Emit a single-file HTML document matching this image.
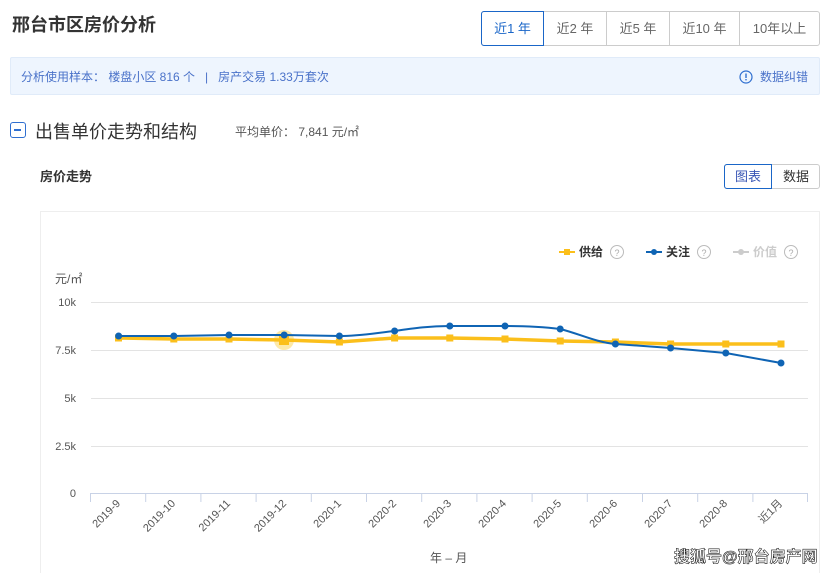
<!DOCTYPE html>
<html><head><meta charset="utf-8"><style>
*{margin:0;padding:0;box-sizing:border-box}
html,body{width:838px;height:573px;overflow:hidden}
body{background:#fff;font-family:"Liberation Sans","Noto Sans CJK SC",sans-serif;position:relative}
.a{position:absolute;white-space:nowrap}
</style></head><body>
<div class="a" style="left:12px;top:11px;font-size:18px;font-weight:bold;color:#333">邢台市区房价分析</div>
<div class="a" style="left:481px;top:11px;height:35px;width:339px;border:1px solid #ccc;border-radius:3px;display:flex;font-size:13px;color:#666">
<div style="width:63px;border:1px solid #1a66c8;margin:-1px 0 -1px -1px;border-radius:3px 0 0 3px;color:#1a66c8;text-align:center;line-height:33px">近1 年</div>
<div style="width:63px;border-right:1px solid #ccc;text-align:center;line-height:33px">近2 年</div>
<div style="width:63px;border-right:1px solid #ccc;text-align:center;line-height:33px">近5 年</div>
<div style="width:70px;border-right:1px solid #ccc;text-align:center;line-height:33px">近10 年</div>
<div style="flex:1;text-align:center;line-height:33px">10年以上</div>
</div>
<div class="a" style="left:10px;top:57px;width:810px;height:38px;background:#eef5fe;border:1px solid #e0ebf9;border-radius:2px"></div>
<div class="a" style="left:21px;top:68px;font-size:12px;color:#4a72c9">分析使用样本： 楼盘小区 816 个 &nbsp;&nbsp;|&nbsp;&nbsp; 房产交易 1.33万套次</div>
<svg class="a" style="left:739px;top:70px" width="14" height="14"><circle cx="7" cy="7" r="6" fill="none" stroke="#2f6fd0" stroke-width="1.2"/><rect x="6.3" y="3.5" width="1.4" height="4.5" fill="#2f6fd0"/><rect x="6.3" y="9" width="1.4" height="1.4" fill="#2f6fd0"/></svg>
<div class="a" style="left:760px;top:68px;font-size:12px;color:#4a72c9">数据纠错</div>
<div class="a" style="left:10px;top:122px;width:16px;height:16px;border:1.5px solid #2f6fd0;border-radius:3px"><div style="position:absolute;left:3px;top:6px;width:7px;height:1.5px;background:#2f6fd0"></div></div>
<div class="a" style="left:35px;top:118px;font-size:18px;color:#333">出售单价走势和结构</div>
<div class="a" style="left:235px;top:123px;font-size:12px;color:#555">平均单价： 7,841 元/㎡</div>
<div class="a" style="left:40px;top:166px;font-size:13px;font-weight:bold;color:#333">房价走势</div>
<div class="a" style="left:724px;top:164px;width:96px;height:25px;border:1px solid #ccc;border-radius:3px;font-size:13px;color:#333">
<div style="position:absolute;left:-1px;top:-1px;width:48px;height:25px;border:1px solid #1a66c8;border-radius:3px 0 0 3px;text-align:center;line-height:23px;color:#3a57b5">图表</div>
<div style="position:absolute;left:47px;top:0;width:48px;text-align:center;line-height:23px">数据</div>
</div>
<div class="a" style="left:40px;top:211px;width:780px;height:370px;border:1px solid #eee"></div>
<svg class="a" style="left:0;top:0" width="838" height="573" font-family="Liberation Sans,Noto Sans CJK SC,sans-serif">
<g stroke="#e3e3e3" stroke-width="1">
<line x1="91" y1="302.5" x2="808" y2="302.5"/><line x1="91" y1="350.5" x2="808" y2="350.5"/><line x1="91" y1="398.5" x2="808" y2="398.5"/><line x1="91" y1="446.5" x2="808" y2="446.5"/>
</g>
<line x1="91" y1="493.5" x2="808" y2="493.5" stroke="#c8d2e6"/>
<g stroke="#c8d2e6">
<line x1="90.5" y1="493" x2="90.5" y2="502"/><line x1="145.7" y1="493" x2="145.7" y2="502"/><line x1="200.9" y1="493" x2="200.9" y2="502"/><line x1="256.1" y1="493" x2="256.1" y2="502"/><line x1="311.3" y1="493" x2="311.3" y2="502"/><line x1="366.5" y1="493" x2="366.5" y2="502"/><line x1="421.7" y1="493" x2="421.7" y2="502"/><line x1="476.9" y1="493" x2="476.9" y2="502"/><line x1="532.1" y1="493" x2="532.1" y2="502"/><line x1="587.3" y1="493" x2="587.3" y2="502"/><line x1="642.5" y1="493" x2="642.5" y2="502"/><line x1="697.7" y1="493" x2="697.7" y2="502"/><line x1="752.9" y1="493" x2="752.9" y2="502"/><line x1="807.5" y1="493" x2="807.5" y2="502"/>
</g>
<g font-size="11" fill="#555" text-anchor="end">
<text x="76" y="306">10k</text><text x="76" y="354">7.5k</text><text x="76" y="402">5k</text><text x="76" y="450">2.5k</text><text x="76" y="497">0</text>
</g>
<text x="55" y="283" font-size="12" fill="#555">元/㎡</text>
<g font-size="11" fill="#555" text-anchor="end">
<text transform="translate(121,504) rotate(-45)">2019-9</text>
<text transform="translate(176,504) rotate(-45)">2019-10</text>
<text transform="translate(231,504) rotate(-45)">2019-11</text>
<text transform="translate(287,504) rotate(-45)">2019-12</text>
<text transform="translate(342,504) rotate(-45)">2020-1</text>
<text transform="translate(397,504) rotate(-45)">2020-2</text>
<text transform="translate(452,504) rotate(-45)">2020-3</text>
<text transform="translate(507,504) rotate(-45)">2020-4</text>
<text transform="translate(562,504) rotate(-45)">2020-5</text>
<text transform="translate(618,504) rotate(-45)">2020-6</text>
<text transform="translate(673,504) rotate(-45)">2020-7</text>
<text transform="translate(728,504) rotate(-45)">2020-8</text>
<text transform="translate(783,504) rotate(-45)">近1月</text>
</g>
<text x="430" y="562" font-size="12" fill="#555">年 – 月</text>
<circle cx="284" cy="340" r="10" fill="#fde9a8"/>
<polyline fill="none" stroke="#fbbf1b" stroke-width="3.5" points="118.6,338 173.8,339 229,339 284.2,340 339.4,342 394.6,338 449.8,338 505,339 560.2,341 615.4,342 670.6,344 725.8,344 781,344"/>
<g fill="#fbbf1b">
<rect x="115" y="334.5" width="7" height="7"/><rect x="170.3" y="335.5" width="7" height="7"/><rect x="225.5" y="335.5" width="7" height="7"/><rect x="279" y="335" width="10" height="10"/><rect x="335.9" y="338.5" width="7" height="7"/><rect x="391.1" y="334.5" width="7" height="7"/><rect x="446.3" y="334.5" width="7" height="7"/><rect x="501.5" y="335.5" width="7" height="7"/><rect x="556.7" y="337.5" width="7" height="7"/><rect x="611.9" y="338.5" width="7" height="7"/><rect x="667.1" y="340.5" width="7" height="7"/><rect x="722.3" y="340.5" width="7" height="7"/><rect x="777.5" y="340.5" width="7" height="7"/>
</g>
<path fill="none" stroke="#0f64b4" stroke-width="2" d="M118.6,336 L173.8,336 L229,335 L284.2,335 L339.4,336 C360,336 375,333 394.6,331 C415,328 430,326 449.8,326 L505,326 C530,326 545,327 560.2,329 C580,334 595,342 615.4,344 L670.6,348 L725.8,353 L781,363"/>
<g fill="#0f64b4">
<circle cx="118.6" cy="336" r="3.5"/><circle cx="173.8" cy="336" r="3.5"/><circle cx="229" cy="335" r="3.5"/><circle cx="284.2" cy="335" r="3.5"/><circle cx="339.4" cy="336" r="3.5"/><circle cx="394.6" cy="331" r="3.5"/><circle cx="449.8" cy="326" r="3.5"/><circle cx="505" cy="326" r="3.5"/><circle cx="560.2" cy="329" r="3.5"/><circle cx="615.4" cy="344" r="3.5"/><circle cx="670.6" cy="348" r="3.5"/><circle cx="725.8" cy="353" r="3.5"/><circle cx="781" cy="363" r="3.5"/>
</g>
<g font-size="12" font-weight="bold">
<line x1="559" y1="252" x2="575" y2="252" stroke="#fbbf1b" stroke-width="2"/><rect x="564" y="249" width="6" height="6" fill="#fbbf1b"/>
<text x="579" y="256" fill="#333">供给</text>
<circle cx="617" cy="252" r="6.5" fill="none" stroke="#bbb"/><text x="617" y="256" font-size="9" font-weight="normal" fill="#aaa" text-anchor="middle">?</text>
<line x1="646" y1="252" x2="662" y2="252" stroke="#0f64b4" stroke-width="2"/><circle cx="654" cy="252" r="3" fill="#0f64b4"/>
<text x="666" y="256" fill="#333">关注</text>
<circle cx="704" cy="252" r="6.5" fill="none" stroke="#bbb"/><text x="704" y="256" font-size="9" font-weight="normal" fill="#aaa" text-anchor="middle">?</text>
<line x1="733" y1="252" x2="749" y2="252" stroke="#ccc" stroke-width="2"/><circle cx="741" cy="252" r="3" fill="#ccc"/>
<text x="753" y="256" fill="#ccc">价值</text>
<circle cx="791" cy="252" r="6.5" fill="none" stroke="#bbb"/><text x="791" y="256" font-size="9" font-weight="normal" fill="#aaa" text-anchor="middle">?</text>
</g>
<text x="674" y="562" font-size="16" font-weight="bold" fill="#fff" stroke="#222" stroke-width="0.6">搜狐号@邢台房产网</text>
</svg>
</body></html>
